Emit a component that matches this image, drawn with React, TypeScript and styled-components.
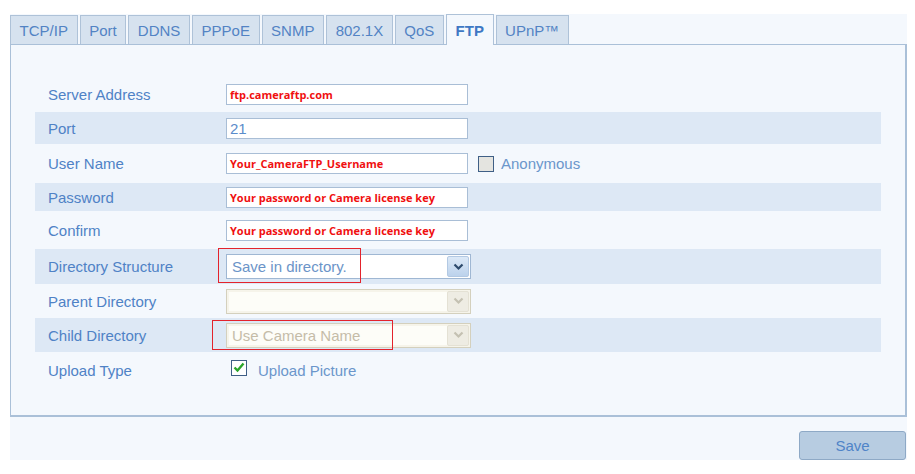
import React from 'react';
import styled, { createGlobalStyle, css } from 'styled-components';

const GlobalStyle = createGlobalStyle`
	html, body {
		margin: 0;
		padding: 0;
		background: #ffffff;
		font-family: 'Liberation Sans', Arial, sans-serif;
	}
`;

const TABS = ['TCP/IP', 'Port', 'DDNS', 'PPPoE', 'SNMP', '802.1X', 'QoS', 'FTP', 'UPnP™'];

type FieldRow =
	| { kind: 'text'; label: string; value: string; red?: boolean; height: number; anonymous?: boolean }
	| { kind: 'select'; label: string; value: string; disabled?: boolean; height: number; marked?: 'wide' | 'narrow' }
	| { kind: 'check'; label: string; value: string; height: number };

const ROWS: FieldRow[] = [
	{ kind: 'text', label: 'Server Address', value: 'ftp.cameraftp.com', red: true, height: 35 },
	{ kind: 'text', label: 'Port', value: '21', height: 32 },
	{ kind: 'text', label: 'User Name', value: 'Your_CameraFTP_Username', red: true, height: 39, anonymous: true },
	{ kind: 'text', label: 'Password', value: 'Your password or Camera license key', red: true, height: 28 },
	{ kind: 'text', label: 'Confirm', value: 'Your password or Camera license key', red: true, height: 38 },
	{ kind: 'select', label: 'Directory Structure', value: 'Save in directory.', height: 35, marked: 'narrow' },
	{ kind: 'select', label: 'Parent Directory', value: '', disabled: true, height: 34 },
	{ kind: 'select', label: 'Child Directory', value: 'Use Camera Name', disabled: true, height: 34, marked: 'wide' },
	{ kind: 'check', label: 'Upload Type', value: 'Upload Picture', height: 36 },
];

const Chevron: React.FC<{ disabled?: boolean }> = ({ disabled }) => (
	<svg width="11" height="8" viewBox="0 0 11 8">
		<path
			d="M1.5 1.5 L5.5 5.5 L9.5 1.5"
			fill="none"
			stroke={disabled ? '#c4c1b2' : '#2d4a6c'}
			strokeWidth="2.2"
		/>
	</svg>
);

const Check = () => (
	<svg width="12" height="11" viewBox="0 0 12 11">
		<path d="M1.5 5.5 L4.5 8.5 L10.5 1.5" fill="none" stroke="#2aa52a" strokeWidth="2.4" />
	</svg>
);

const App: React.FC = () => {
	return (
		<>
			<GlobalStyle />
			<Page>
				<Frame>
					<TabBar>
						{TABS.map((tab) => (
							<Tab key={tab} active={tab === 'FTP'}>
								{tab}
							</Tab>
						))}
					</TabBar>
					<Panel>
						{ROWS.map((row, i) => (
							<Row key={row.label} shaded={i % 2 === 1} height={row.height}>
								<Label>{row.label}</Label>
								{row.kind === 'text' && (
									<>
										<TextBox red={row.red}>{row.value}</TextBox>
										{row.anonymous && (
											<CheckWrap offset={10}>
												<CheckBox grey lift={0} />
												<CheckLabel gap={7}>Anonymous</CheckLabel>
											</CheckWrap>
										)}
									</>
								)}
								{row.kind === 'select' && (
									<SelectBox disabled={row.disabled}>
										<SelectValue disabled={row.disabled}>{row.value}</SelectValue>
										<ArrowButton disabled={row.disabled}>
											<Chevron disabled={row.disabled} />
										</ArrowButton>
										{row.marked && <Marker wide={row.marked === 'wide'} />}
									</SelectBox>
								)}
								{row.kind === 'check' && (
									<CheckWrap offset={5}>
										<CheckBox lift={5}>
											<Check />
										</CheckBox>
										<CheckLabel gap={11}>{row.value}</CheckLabel>
									</CheckWrap>
								)}
							</Row>
						))}
					</Panel>
					<Footer>
						<SaveButton>Save</SaveButton>
					</Footer>
				</Frame>
			</Page>
		</>
	);
};

export default App;

const Page = styled.div`
	width: 915px;
	height: 474px;
	padding: 14px 0 0 10px;
	box-sizing: border-box;
	overflow: hidden;
`;

const Frame = styled.div`
	width: 897px;
	height: 446px;
	background: #f4f8fd;
	display: flex;
	flex-direction: column;
`;

const TabBar = styled.div`
	display: flex;
	align-items: flex-end;
	gap: 2px;
	height: 30px;
	position: relative;
	z-index: 1;
`;

const Tab = styled.div<{ active?: boolean }>`
	height: 29px;
	box-sizing: border-box;
	padding: 0 8.6px;
	display: flex;
	align-items: center;
	font-size: 15px;
	color: #5283c4;
	background: #d6e2ef;
	border: 1px solid #aec2d8;
	border-bottom: none;

	${(p) =>
		p.active &&
		css`
			height: 31px;
			margin-bottom: -1px;
			background: #f4f8fd;
			color: #3f78c4;
			font-weight: bold;
		`}
`;

const Panel = styled.div`
	height: 373px;
	box-sizing: border-box;
	border: 1px solid #aac0d8;
	border-right-width: 2px;
	border-bottom-width: 2px;
	padding: 32px 24px 0 24px;
	display: flex;
	flex-direction: column;
`;

const Row = styled.div<{ shaded?: boolean; height: number }>`
	height: ${(p) => p.height}px;
	display: flex;
	align-items: center;
	padding-left: 13px;
	background: ${(p) => (p.shaded ? '#dde8f5' : 'transparent')};
`;

const Label = styled.div`
	width: 178px;
	flex: none;
	font-size: 15px;
	color: #4f82c6;
`;

const TextBox = styled.div<{ red?: boolean }>`
	width: 242px;
	height: 21px;
	box-sizing: border-box;
	background: #ffffff;
	border: 1px solid #a9bed6;
	display: flex;
	align-items: center;
	padding-left: 3px;
	white-space: nowrap;
	overflow: hidden;
	${(p) =>
		p.red
			? css`
					color: #f01010;
					font-weight: bold;
					font-size: 11px;
					font-family: 'Open Sans', 'Liberation Sans', sans-serif;
			  `
			: css`
					color: #5b8ccb;
					font-size: 15px;
			  `}
`;

const SelectBox = styled.div<{ disabled?: boolean }>`
	position: relative;
	width: 245px;
	height: 25px;
	box-sizing: border-box;
	display: flex;
	align-items: stretch;
	background: #ffffff;
	border: 1px solid ${(p) => (p.disabled ? '#d4d0bd' : '#9fb7d3')};
	${(p) =>
		p.disabled &&
		css`
			box-shadow: inset 0 0 0 2px #f6f4ea;
			background: #fdfdf8;
		`}
`;

const SelectValue = styled.div<{ disabled?: boolean }>`
	flex: 1;
	display: flex;
	align-items: center;
	padding-left: 5px;
	font-size: 15px;
	color: ${(p) => (p.disabled ? '#c5bca8' : '#6b94c8')};
`;

const ArrowButton = styled.div<{ disabled?: boolean }>`
	width: 20px;
	margin: 1px;
	display: flex;
	align-items: center;
	justify-content: center;
	border-radius: 2px;
	background: ${(p) =>
		p.disabled ? '#eeece3' : 'linear-gradient(#dce9f7, #bcd2ec)'};
	border: 1px solid ${(p) => (p.disabled ? '#e4e1d4' : '#b3c9e3')};
`;

const Marker = styled.div<{ wide?: boolean }>`
	position: absolute;
	top: ${(p) => (p.wide ? '-4px' : '-7px')};
	left: ${(p) => (p.wide ? '-15px' : '-9px')};
	width: ${(p) => (p.wide ? '181px' : '143px')};
	height: ${(p) => (p.wide ? '30px' : '35px')};
	box-sizing: border-box;
	border: 1px solid #e3232c;
	pointer-events: none;
`;

const CheckWrap = styled.div<{ offset: number }>`
	display: flex;
	align-items: center;
	margin-left: ${(p) => p.offset}px;
`;

const CheckBox = styled.div<{ grey?: boolean; lift: number }>`
	width: 16px;
	height: 16px;
	box-sizing: border-box;
	border: 1px solid #3f5f86;
	background: ${(p) => (p.grey ? '#e4e4e0' : '#ffffff')};
	display: flex;
	align-items: center;
	justify-content: center;
	margin-top: -${(p) => p.lift}px;
`;

const CheckLabel = styled.span<{ gap: number }>`
	margin-left: ${(p) => p.gap}px;
	font-size: 15px;
	color: #6b96cb;
`;

const Footer = styled.div`
	flex: 1;
	display: flex;
	justify-content: flex-end;
	align-items: flex-start;
	padding: 14px 0 0 0;
`;

const SaveButton = styled.button`
	width: 107px;
	height: 29px;
	margin-right: 1px;
	box-sizing: border-box;
	background: #b7cce1;
	border: 1px solid #8ea9c6;
	border-radius: 3px;
	font-family: 'Liberation Sans Narrow', 'Liberation Sans', Arial, sans-serif;
	font-size: 15px;
	color: #4f84c8;
	padding: 0;
`;
